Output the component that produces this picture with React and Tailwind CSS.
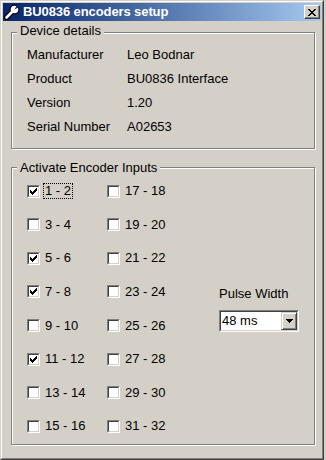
import React from 'react';

const details = [
  ['Manufacturer', 'Leo Bodnar'],
  ['Product', 'BU0836 Interface'],
  ['Version', '1.20'],
  ['Serial Number', 'A02653'],
];

const checked = ['1 - 2', '5 - 6', '7 - 8', '11 - 12'];

// row-major order: left column 1..16, right column 17..32
const encoders = [];
for (let i = 0; i < 8; i++) {
  encoders.push(`${i * 2 + 1} - ${i * 2 + 2}`);
  encoders.push(`${i * 2 + 17} - ${i * 2 + 18}`);
}

const WrenchIcon = () => (
  <svg width="16" height="16" viewBox="0 0 16 16" className="ml-[1px] shrink-0">
    {/* outline */}
    <line x1="2.5" y1="13.5" x2="8.5" y2="7.5" stroke="#000" strokeWidth="5" strokeLinecap="round" />
    <circle cx="10.5" cy="5.5" r="5" fill="#000" />
    {/* body */}
    <line x1="2.5" y1="13.5" x2="8.5" y2="7.5" stroke="#fff" strokeWidth="2.6" strokeLinecap="round" />
    <circle cx="10.5" cy="5.5" r="3.8" fill="#fff" />
    {/* jaw opening */}
    <polygon points="10.5,5.5 13.5,0 16,0 16,2.5" fill="#0c266b" />
    <polygon points="10.5,5.5 13,1.2 14.8,2.9" fill="#000" opacity="0" />
  </svg>
);

const CheckMark = () => (
  <svg width="7" height="7" viewBox="0 0 7 7" shapeRendering="crispEdges">
    <path d="M0 2h1v1h1v1h1v-1h1v-1h1v-1h1v-1h1v3h-1v1h-1v1h-1v1h-1v1h-1v-1h-1v-1h-1z" fill="#000" />
  </svg>
);

const Checkbox = ({ label, isChecked, focused }) => (
  <div className="flex h-[32px] items-center">
    <div className="h-[13px] w-[13px] border border-t-[#808080] border-l-[#808080] border-r-white border-b-white">
      <div className="flex h-full w-full items-center justify-center border border-t-[#404040] border-l-[#404040] border-r-[#d4d0c8] border-b-[#d4d0c8] bg-white">
        {isChecked && <CheckMark />}
      </div>
    </div>
    <span
      className={`ml-[3px] border px-[1px] leading-[14px] ${
        focused ? 'border-dotted border-black' : 'border-transparent'
      }`}
    >
      {label}
    </span>
  </div>
);

const GroupBox = ({ title, titleClass, className, children }) => (
  <div className={`relative border border-[#808080] shadow-[1px_1px_0_#fff,inset_1px_1px_0_#fff] ${className}`}>
    <span className={`absolute left-[5px] bg-[#d4d0c8] px-[3px] leading-[15px] ${titleClass}`}>{title}</span>
    {children}
  </div>
);

const App = () => {
  return (
    <div className="h-[460px] w-[326px] overflow-hidden bg-[#d4d0c8] font-['Liberation_Sans',Arial,sans-serif] text-[13px] text-black">
      <div className="h-[460px] w-[324px] border border-t-[#d4d0c8] border-l-[#d4d0c8] border-r-[#404040] border-b-[#404040]">
        <div className="flex h-full flex-col border border-t-white border-l-white border-r-[#808080] border-b-[#808080] p-[1px]">
          {/* Title bar */}
          <div className="flex h-[18px] shrink-0 items-center bg-linear-to-r from-[#0a246a] to-[#a6caf0]">
            <WrenchIcon />
            <span className="ml-[3px] text-[13px] font-bold leading-[16px] tracking-[-0.1px] text-white">
              BU0836 encoders setup
            </span>
            <div className="ml-auto mr-[1px] flex h-[14px] w-[16px] items-center justify-center border border-t-white border-l-white border-r-[#404040] border-b-[#404040] bg-[#d4d0c8] shadow-[inset_-1px_-1px_0_#808080]">
              <svg width="8" height="7" viewBox="0 0 8 7" shapeRendering="crispEdges">
                <path
                  d="M0 0h2v1h-2z M6 0h2v1h-2z M1 1h2v1h-2z M5 1h2v1h-2z M2 2h4v1h-4z M3 3h2v1h-2z M2 4h4v1h-4z M1 5h2v1h-2z M5 5h2v1h-2z M0 6h2v1h-2z M6 6h2v1h-2z"
                  fill="#000"
                />
              </svg>
            </div>
          </div>

          <div className="pl-[8px] pt-[11px]">
            {/* Device details */}
            <GroupBox title="Device details" titleClass="-top-[10px]" className="w-[304px] pb-[9px] pl-[15px] pt-[10px]">
              {details.map(([label, value]) => (
                <div key={label} className="flex h-[24px] items-center leading-[16px]">
                  <span className="w-[100px]">{label}</span>
                  <span>{value}</span>
                </div>
              ))}
            </GroupBox>

            {/* Encoder inputs */}
            <GroupBox
              title="Activate Encoder Inputs"
              titleClass="-top-[8px]"
              className="mt-[18px] flex h-[278px] w-[304px] pl-[15px] pt-[7px]"
            >
              <div className="grid grid-cols-[80px_80px]">
                {encoders.map((label) => (
                  <Checkbox key={label} label={label} isChecked={checked.includes(label)} focused={label === '1 - 2'} />
                ))}
              </div>

              <div className="ml-[32px] flex flex-col pt-[111px]">
                <span className="leading-[16px]">Pulse Width</span>
                <div className="mt-[8px] h-[22px] w-[80px] border border-t-[#808080] border-l-[#808080] border-r-white border-b-white">
                  <div className="flex h-full items-center border border-t-[#404040] border-l-[#404040] border-r-[#d4d0c8] border-b-[#d4d0c8] bg-white">
                    <span className="pl-[1px] leading-[16px]">48 ms</span>
                    <div className="ml-auto flex h-full w-[16px] items-center justify-center border border-t-[#d4d0c8] border-l-[#d4d0c8] border-r-[#404040] border-b-[#404040] bg-[#d4d0c8] shadow-[inset_1px_1px_0_#fff,inset_-1px_-1px_0_#808080]">
                      <svg width="7" height="4" viewBox="0 0 7 4" shapeRendering="crispEdges">
                        <path d="M0 0h7v1h-1v1h-1v1h-1v1h-1v-1h-1v-1h-1v-1h-1z" fill="#000" />
                      </svg>
                    </div>
                  </div>
                </div>
              </div>
            </GroupBox>
          </div>
        </div>
      </div>
    </div>
  );
};

export default App;
